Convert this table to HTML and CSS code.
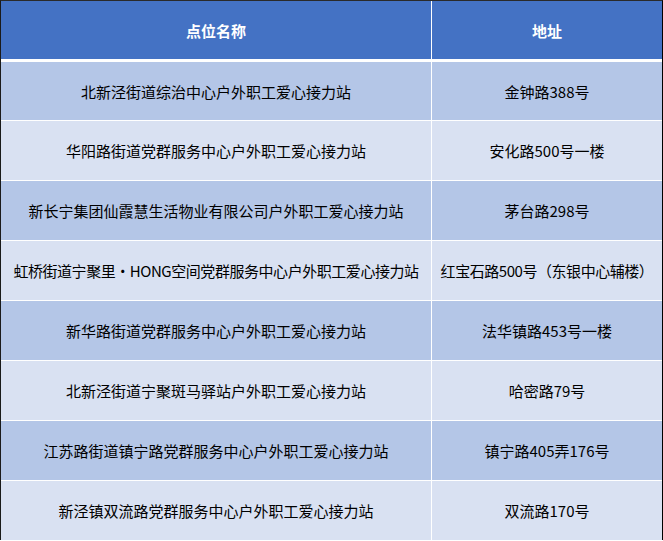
FILE: index.html
```html
<!DOCTYPE html>
<html lang="zh-CN">
<head>
<meta charset="utf-8">
<title>户外职工爱心接力站</title>
<link rel="stylesheet" href="styles.css">
</head>
<body>
<div class="sheet">
  <div class="cell head">点位名称</div>
  <div class="cell head">地址</div>
  <div class="cell dark first">北新泾街道综治中心户外职工爱心接力站</div>
  <div class="cell dark first">金钟路388号</div>
  <div class="cell light">华阳路街道党群服务中心户外职工爱心接力站</div>
  <div class="cell light">安化路500号一楼</div>
  <div class="cell dark">新长宁集团仙霞慧生活物业有限公司户外职工爱心接力站</div>
  <div class="cell dark">茅台路298号</div>
  <div class="cell light tight">虹桥街道宁聚里·HONG空间党群服务中心户外职工爱心接力站</div>
  <div class="cell light tight">红宝石路500号（东银中心辅楼）</div>
  <div class="cell dark">新华路街道党群服务中心户外职工爱心接力站</div>
  <div class="cell dark">法华镇路453号一楼</div>
  <div class="cell light">北新泾街道宁聚斑马驿站户外职工爱心接力站</div>
  <div class="cell light">哈密路79号</div>
  <div class="cell dark">江苏路街道镇宁路党群服务中心户外职工爱心接力站</div>
  <div class="cell dark">镇宁路405弄176号</div>
  <div class="cell light">新泾镇双流路党群服务中心户外职工爱心接力站</div>
  <div class="cell light">双流路170号</div>
</div>
</body>
</html>
```
FILE: styles.css
```css
html, body {
  margin: 0;
  padding: 0;
  background: #ffffff;
}
body {
  width: 663px;
  height: 541px;
  overflow: hidden;
  font-family: "Noto Sans CJK SC", "Noto Sans", sans-serif;
}
.sheet {
  display: grid;
  grid-template-columns: 430px 230px;
  grid-template-rows: 58px 60px;
  grid-auto-rows: 59px;
  column-gap: 1px;
  row-gap: 1px;
  background: #ffffff;
  border-left: 1px solid #1a1a1a;
  border-right: 1px solid #000000;
  border-top: 1px solid #2a2a2a;
  width: 661px;
}
.cell {
  display: flex;
  align-items: center;
  justify-content: center;
  font-size: 15px;
  color: #000000;
  white-space: nowrap;
}
.head {
  background: #4472c4;
  color: #ffffff;
  font-weight: bold;
  padding-top: 1px;
}
.first {
  border-top: 2px solid #ffffff;
}
.tight {
  letter-spacing: -0.45px;
}
.dark { background: #b4c6e7; }
.light { background: #d9e1f2; }
```
